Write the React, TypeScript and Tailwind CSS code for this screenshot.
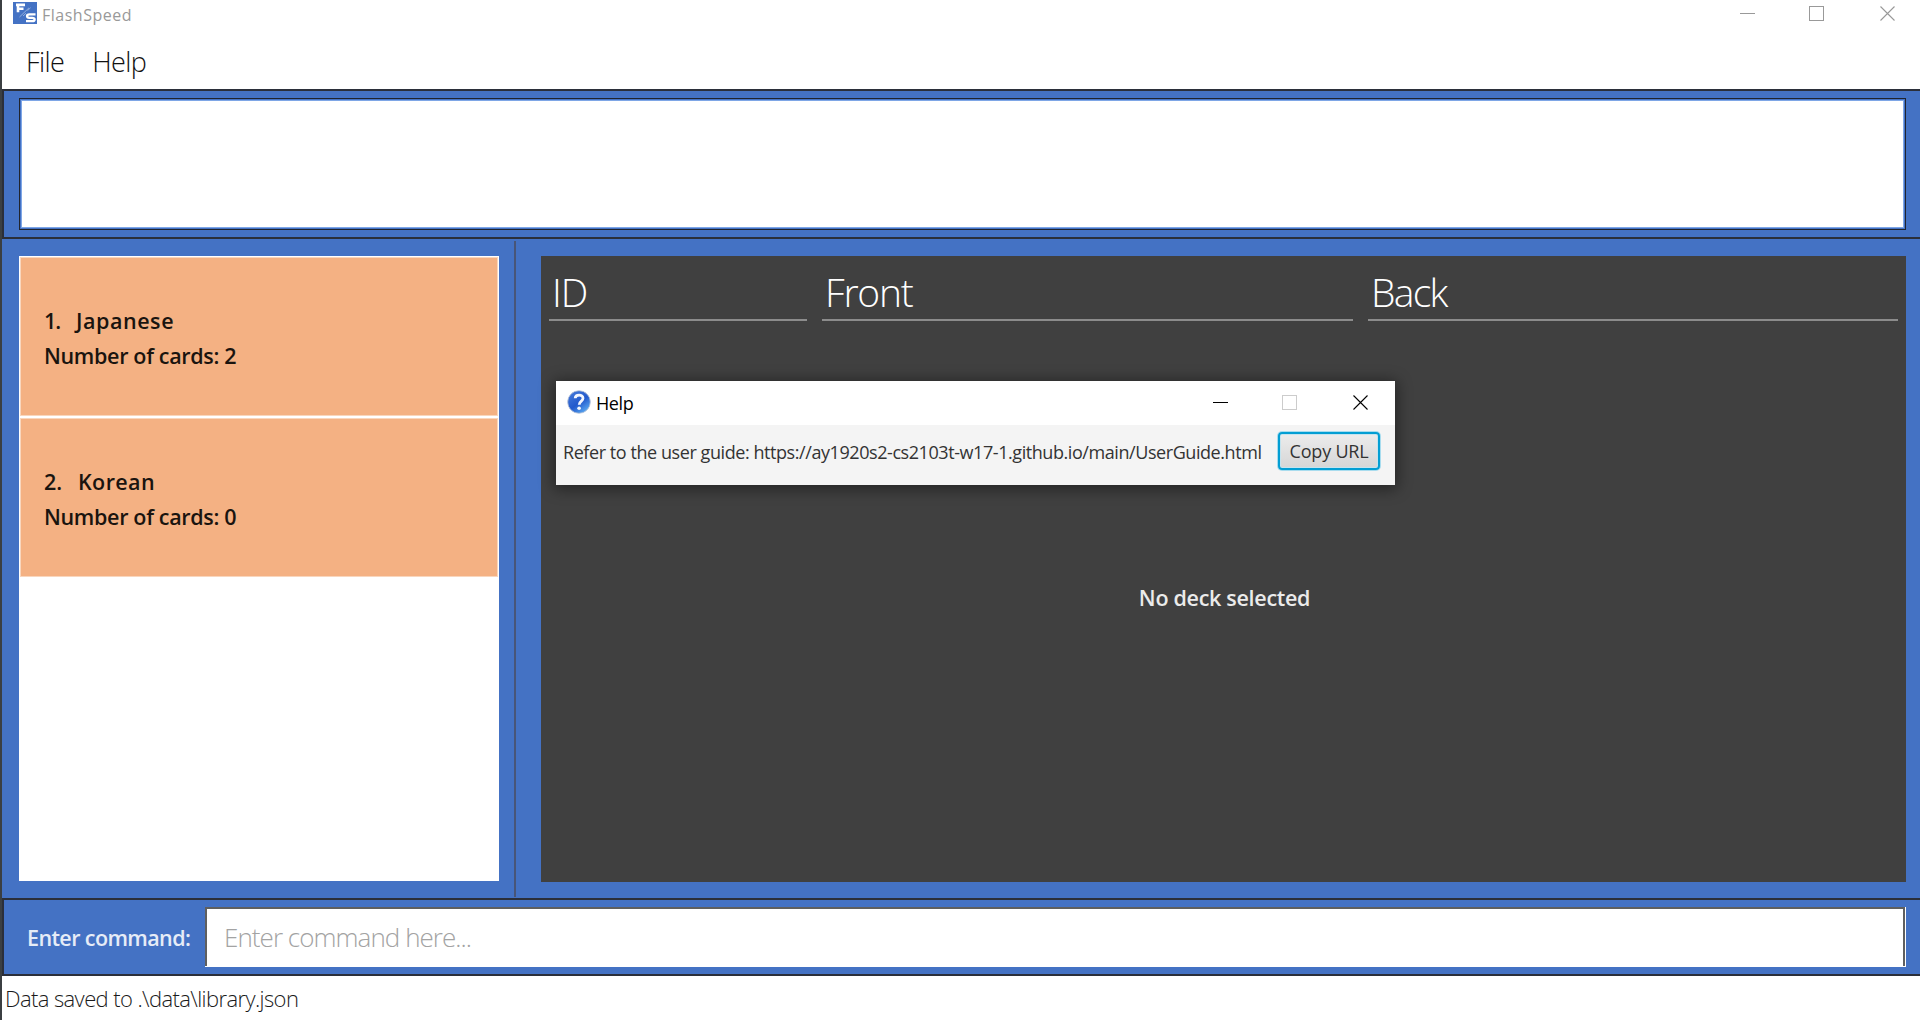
type Deck = { name: string; count: number; nameClass: string; indexClass: string };

const decks: Deck[] = [
  { name: "Japanese", count: 2, nameClass: "tracking-[0.55px]", indexClass: "w-[32px] tracking-[-1px]" },
  { name: "Korean", count: 0, nameClass: "tracking-[0.4px]", indexClass: "w-[34px]" },
];

function WindowControls({ main }: { main?: boolean }) {
  const color = main ? "#999999" : "#000000";
  return (
    <svg width="156" height="15" viewBox="0 0 156 15" fill="none" className="shrink-0">
      <path d="M0 7.5H15" stroke={color} />
      <rect x="69.5" y="0.5" width="14" height="14" stroke={main ? "#999999" : "#cccccc"} />
      <path d="M140.5 0.5L154.5 14.5M154.5 0.5L140.5 14.5" stroke={color} strokeWidth="1.1" />
    </svg>
  );
}

function AppLogo() {
  return (
    <svg width="24" height="22" viewBox="0 0 24 22" className="mt-[2px] shrink-0">
      <rect width="24" height="22" fill="#4472c4" />
      <path d="M3 2.9H12M5 2.9V10.2M4 6.8H10.5" stroke="#fff" strokeWidth="2.6" fill="none" />
      <path d="M6.5 15L16 5.8M10 14L13 11.2M14.5 8.6L17.5 5.8" stroke="#b4c7e7" strokeWidth="0.7" />
      <path d="M22.5 12.4H16.5C13.2 12.4 13.2 15.8 16.5 15.8H19C22.5 15.8 22.5 19.2 19 19.2H13" stroke="#fff" strokeWidth="2.3" fill="none" />
    </svg>
  );
}

function HelpIcon() {
  return (
    <svg width="24" height="24" viewBox="0 0 24 24" className="shrink-0">
      <defs>
        <linearGradient id="ball" x1="0.2" y1="0.1" x2="0.85" y2="0.95">
          <stop offset="0" stopColor="#3f74d8" />
          <stop offset="0.5" stopColor="#2259cc" />
          <stop offset="1" stopColor="#5fb0f5" />
        </linearGradient>
      </defs>
      <circle cx="12" cy="12" r="11.3" fill="url(#ball)" stroke="#b9c3d6" strokeWidth="0.8" />
      <path d="M8.2 8.2C8.4 4.2 16 4 16 8.3C16 11.2 12.3 11 12.2 14.8" stroke="#f4f7ff" strokeWidth="2.8" fill="none" />
      <circle cx="12.1" cy="18.3" r="1.8" fill="#f4f7ff" />
    </svg>
  );
}

function DeckCard({ deck, index }: { deck: Deck; index: number }) {
  return (
    <div className="flex h-[159px] flex-col border border-[#f9d6bd] bg-[#f4b183] pt-[50px] pl-[23px] text-[21.5px] font-semibold text-[#1a140f]">
      <div className="flex h-[26px] items-center leading-none">
        <span className={deck.indexClass}>{index}.</span>
        <span className={deck.nameClass}>{deck.name}</span>
      </div>
      <div className="mt-[9px] flex h-[26px] items-center leading-none tracking-[-0.33px] whitespace-nowrap">
        Number of cards: {deck.count}
      </div>
    </div>
  );
}

function ColumnHeader({ label, className }: { label: string; className: string }) {
  return (
    <div className={`h-[65px] border-b-2 border-[#8c8c8c] pt-[16px] pl-[3px] text-[39px] leading-[39px] font-light text-white ${className}`}>
      {label}
    </div>
  );
}

function HelpDialog() {
  return (
    <div className="absolute top-[381px] left-[554px] h-[104px] w-[839px] bg-[#f4f4f4] shadow-[0_2px_14px_2px_rgba(0,0,0,0.45)]">
      <div className="flex h-[44px] items-start justify-between bg-white pr-[26px] pl-[11px]">
        <div className="flex items-center pt-[9px]">
          <HelpIcon />
          <span className="mt-[2px] ml-[5px] text-[18px] leading-none tracking-[-0.4px] text-black">Help</span>
        </div>
        <div className="pt-[14px]">
          <WindowControls />
        </div>
      </div>
      <div className="flex items-start pl-[7px] text-[#333333]">
        <span className="w-[715px] pt-[18px] text-[18px] leading-none tracking-[-0.43px] whitespace-nowrap">
          Refer to the user guide: https://ay1920s2-cs2103t-w17-1.github.io/main/UserGuide.html
        </span>
        <button className="mt-[7px] h-[38px] w-[102px] rounded-[4px] border-2 border-[#039ed3] bg-gradient-to-b from-[#ececec] to-[#d6d6d6] pb-[1px] text-[18px] leading-none tracking-[-0.2px] whitespace-nowrap shadow-[0_0_0_1px_#a8dcee,inset_0_0_0_1px_#c5e4ef]">
          Copy URL
        </button>
      </div>
    </div>
  );
}

export default function App() {
  return (
    <div className="relative flex h-[1020px] w-[1920px] flex-col overflow-hidden border-l-2 border-[#3b3f42] bg-white font-['Open_Sans',sans-serif]">
      <header className="flex h-[27px] shrink-0 items-start justify-between pr-[24px] pl-[11px]">
        <div className="flex">
          <AppLogo />
          <span className="mt-[7px] ml-[5px] text-[16px] leading-none tracking-[0.5px] text-[#999999]">FlashSpeed</span>
        </div>
        <div className="pt-[6px]">
          <WindowControls main />
        </div>
      </header>
      <nav className="flex h-[62px] shrink-0 items-center gap-[28px] pt-[7px] pl-[24px] text-[27px] leading-none font-light tracking-[-0.6px] text-[#111111]">
        <span>File</span>
        <span>Help</span>
      </nav>

      <section className="h-[150px] shrink-0 border-y-2 border-l-2 border-[#2b2f3a] bg-[#4472c4] pt-[7px] pr-[14px] pl-[15px]">
        <div className="h-[132px] border border-[#20242e] bg-[#4472c4] p-px">
          <div className="h-full border border-[#7ea6e6] bg-white" />
        </div>
      </section>

      <main className="flex h-[659px] shrink-0 bg-[#4472c4] pt-[2px] pr-[14px] pb-px pl-[17px]">
        <aside className="mt-[15px] flex h-[625px] w-[480px] flex-col gap-[2px] bg-white p-px">
          {decks.map((deck, i) => (
            <DeckCard key={deck.name} deck={deck} index={i + 1} />
          ))}
        </aside>
        <div className="ml-[15px] w-[2px] bg-[#485578]" />
        <section className="mt-[15px] ml-[25px] flex h-[626px] flex-1 flex-col bg-[#404040]">
          <div className="flex pl-[8px]">
            <ColumnHeader label="ID" className="w-[258px] tracking-[-1.2px]" />
            <ColumnHeader label="Front" className="ml-[15px] w-[531px] tracking-[-1.2px]" />
            <ColumnHeader label="Back" className="ml-[15px] w-[530px] tracking-[-1.7px]" />
          </div>
          <div className="mt-[266px] pl-[2px] text-center text-[21.5px] leading-none font-semibold tracking-[-0.3px] text-[#ebebeb]">
            No deck selected
          </div>
        </section>
      </main>

      <section className="flex h-[78px] shrink-0 border-y-2 border-l-2 border-[#2b2f3a] bg-[#4472c4] pt-[7px] pr-[14px]">
        <label className="w-[201px] pt-[20px] pl-[23px] text-[21.5px] leading-none font-semibold tracking-[-0.6px] whitespace-nowrap text-[#e6ecf7]">
          Enter command:
        </label>
        <div className="flex h-[60px] flex-1 bg-white pr-px">
          <div className="h-[59px] flex-1 border-t-2 border-r-2 border-l-2 border-t-[#5f5f5f] border-r-[#5f5f5f] border-l-[#5f5f5f] pt-[15px] pl-[17px] text-[26px] leading-none font-light tracking-[-0.95px] text-[#a3a3a3]">
            Enter command here...
          </div>
        </div>
      </section>

      <footer className="flex h-[44px] shrink-0 items-center pl-[3px] pt-px text-[22px] font-light tracking-[-0.6px] whitespace-nowrap text-[#1a1a1a]">
        {"Data saved to .\\data\\library.json"}
      </footer>

      <HelpDialog />
    </div>
  );
}
